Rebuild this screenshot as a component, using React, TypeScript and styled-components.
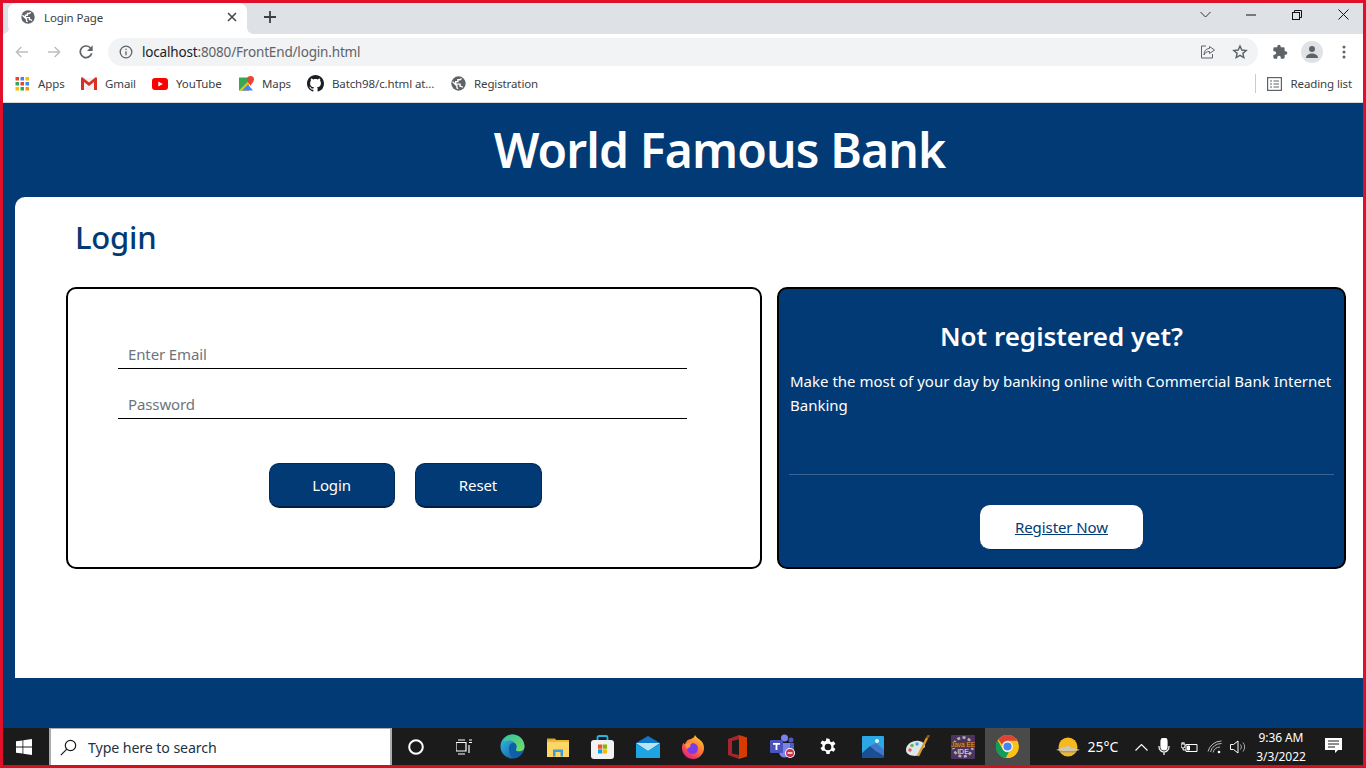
import React from "react";
import styled, { createGlobalStyle } from "styled-components";

const Global = createGlobalStyle`
  html, body { margin: 0; padding: 0; height: 100%; overflow: hidden; background: #fff; }
  * { box-sizing: border-box; }
  body { font-family: "Noto Sans", "Open Sans", "Liberation Sans", sans-serif; }
`;

const Frame = styled.div`
  width: 1366px; height: 768px; border: 3px solid #e0102a; border-bottom-color: #d0121f;
  display: flex; flex-direction: column; overflow: hidden;
`;
const TabStrip = styled.div`
  height: 31px; background: #dee1e6; display: flex; align-items: flex-end; padding-left: 5px; flex: none;
`;
const Tab = styled.div`
  position: relative;
  width: 239px; height: 31px; background: #fff; border-radius: 8px 8px 0 0; display: flex; align-items: center;
  padding: 0 10px 3px 13px; font-size: 11.5px; color: #3c4043; gap: 9px; letter-spacing: -0.1px;
  &::before, &::after { content: ""; position: absolute; bottom: 0; width: 6px; height: 6px; }
  &::before { left: -5px; background: radial-gradient(circle at 0 0, #dee1e6 5.500px, #fff 6px); }
  &::after { right: -6px; background: radial-gradient(circle at 100% 0, #dee1e6 5.500px, #fff 6px); }
`;
const TabTitle = styled.span` flex: 1; `;
const NewTab = styled.div` margin: 0 0 3px 12px; width: 22px; height: 28px; display: flex; align-items: center; justify-content: center; `;
const WindowControls = styled.div`
  margin-left: auto; margin-right: -3px; height: 31px; display: flex; align-items: center; padding: 0 0 8px 0;
`;
const WinButton = styled.div<{ $w: number }>`
  width: ${p => p.$w}px; display: flex; justify-content: center; align-items: center;
`;
const Toolbar = styled.div`
  height: 35px; background: #fff; display: flex; align-items: center; flex: none; padding-left: 3px;
`;
const NavButton = styled.div`
  width: 32px; height: 28px; display: flex; align-items: center; justify-content: center;
`;
const Omnibox = styled.div`
  margin-left: 6px; width: 1150px; height: 28px; background: #f1f3f4; border-radius: 14px; display: flex; align-items: center;
  padding: 0 2px 0 11px; font-size: 13.5px; color: #5f6368; letter-spacing: -0.17px;
`;
const Host = styled.span` color: #202124; `;
const UrlText = styled.span` flex: 1; margin-left: 9px; `;
const OmniIcon = styled.span` width: 32px; display: flex; justify-content: center; `;
const ToolIcons = styled.div` display: flex; align-items: center; margin-left: 14px; `;
const Avatar = styled.div`
  width: 22px; height: 22px; border-radius: 50%; background: #e0e2e6; display: flex; align-items: center; justify-content: center;
  margin: 0 14px 0 13px;
`;
const Bookmarks = styled.div`
  height: 34px; background: #fff; border-bottom: 1px solid #d4d6d9; display: flex; align-items: center; flex: none;
  padding: 0 11px 4px 12px; font-size: 11.5px; color: #3c4043; letter-spacing: -0.12px;
`;
const Bookmark = styled.div<{ $w: number }>`
  width: ${p => p.$w}px; display: flex; align-items: center; gap: 8px; white-space: nowrap;
`;
const ReadingList = styled.div`
  margin-left: auto; border-left: 1px solid #c9cbce; padding-left: 11px; height: 19px; display: flex; align-items: center; gap: 9px;
`;
const Page = styled.div`
  flex: 1; background: #023a75; display: flex; flex-direction: column; min-height: 0;
`;
const Title = styled.h1`
  margin: 0; height: 94px; line-height: 93px; text-align: center; color: #fff; font-size: 48px; font-weight: 600; padding-left: 73px;
  letter-spacing: -0.86px;
`;
const Main = styled.main`
  margin-left: 12px; height: 481px; background: #fff; border-radius: 10px 0 0 0; padding: 18px 17px 0 51px;
`;
const Heading = styled.h2`
  margin: 0 0 28px 9px; height: 44px; line-height: 44px; color: #023a75; font-size: 31px; font-weight: 500; letter-spacing: -0.2px;
`;
const Cards = styled.div` display: grid; grid-template-columns: 696px 569px; gap: 15px; `;
const LoginCard = styled.form`
  height: 282px; border: 2px solid #000; border-radius: 10px; padding: 48px 0 0 50px; background: #fff;
`;
const Field = styled.div`
  width: 569px; height: 32px; margin-bottom: 18px; border-bottom: 1px solid #000; padding: 7px 0 0 10px;
  font-size: 15px; line-height: 20px; color: #6c757d; letter-spacing: -0.12px;
`;
const Buttons = styled.div` display: flex; justify-content: center; gap: 20px; margin: 44px 0 0 -22px; width: 618px; `;
const PrimaryButton = styled.button<{ $w: number }>`
  width: ${p => p.$w}px; height: 45px; background: #023a75; color: #fff; border: 1px solid #012a55; border-bottom: 2px solid #011f40; border-radius: 10px;
  font: inherit; font-size: 15px; letter-spacing: -0.12px; padding: 0 0 1px;
`;
const InfoCard = styled.section`
  height: 282px; border: 2px solid #000; border-radius: 10px; background: #023a75; color: #fff; padding: 29px 10px 0 10px;
  display: flex; flex-direction: column;
`;
const InfoTitle = styled.h3`
  margin: 0; height: 36px; line-height: 36px; text-align: center; font-size: 26px; font-weight: 600; letter-spacing: 0;
`;
const InfoText = styled.p`
  margin: 15px 0 0 1px; font-size: 15px; line-height: 24px; letter-spacing: 0; height: 48px;
`;
const Rule = styled.hr`
  margin: 57px 0 0; border: 0; height: 1px; background: #3a6493; flex: none;
`;
const RegisterRow = styled.div` display: flex; justify-content: center; margin-top: 30px; `;
const RegisterLink = styled.a`
  width: 163px; height: 45px; line-height: 44px; background: #fff; border-radius: 10px; text-align: center; color: #023a75;
  font-size: 15px; text-decoration: underline; letter-spacing: -0.08px; border-bottom: 1px solid #012a55; cursor: pointer;
`;
const Taskbar = styled.div`
  height: 37px; flex: none; background: #1b1b1b; display: flex; align-items: center; color: #fff;
`;
const Start = styled.div` width: 46px; height: 100%; display: flex; align-items: center; justify-content: center; padding-right: 4px; `;
const SearchBox = styled.div`
  width: 343px; height: 100%; background: #fff; border: 2px solid #a9adb0; border-width: 1px 2px 0 2px; display: flex; align-items: center; color: #1f3344;
  font-size: 14.2px; padding: 1px 0 0 9px; gap: 11px; letter-spacing: -0.1px;
`;
const TaskCell = styled.div<{ $w?: number; $active?: boolean }>`
  width: ${p => p.$w ?? 45}px; height: 100%; flex: none; display: flex; align-items: center; justify-content: center;
  background: ${p => (p.$active ? "#4a4a4a" : "transparent")};
`;
const Tray = styled.div` display: flex; align-items: center; height: 100%; font-size: 14px; padding-left: 26px; flex: 1; `;
const TrayCell = styled.div<{ $w: number }>`
  width: ${p => p.$w}px; display: flex; justify-content: center; align-items: center; flex: none;
`;
const Clock = styled.div`
  width: 64px; text-align: center; font-size: 12px; line-height: 19px; letter-spacing: -0.1px; white-space: nowrap;
`;

const Globe = ({ s = 14, c = "#5f6368" }: { s?: number; c?: string }) => (
  <svg width={s} height={s} viewBox="0 0 24 24">
    <circle cx="12" cy="12" r="11.500" fill={c} />
    <path fill="none" stroke="#fff" strokeWidth="2.200" d="M2.500 9l7 7v2.500c0 1 1 1.500 2 1.500M18.500 18.500c-.3-1-1.200-2-2.300-2H14.500V13H7.500V9H11V6h3c1.200 0 2.200-1 2.200-2.500"/>
  </svg>
);

const Back = ({ c }: { c: string }) => (
  <svg width="16" height="16" viewBox="0 0 24 24" fill="none" stroke={c} strokeWidth="2.200"><path d="M21 12H4M11 4.500 3.500 12l7.500 7.500"/></svg>
);
const Forward = ({ c }: { c: string }) => (
  <svg width="16" height="16" viewBox="0 0 24 24" fill="none" stroke={c} strokeWidth="2.200"><path d="M3 12h17M13 4.500l7.500 7.500-7.500 7.500"/></svg>
);

const MsLogo = () => (
  <svg width="16" height="16" viewBox="0 0 16 16"><path fill="#fff" d="M0 2.300 6.500 1.400v6.200H0zM7.300 1.300 16 0v7.600H7.300zM0 8.400h6.500v6.200L0 13.700zM7.300 8.400H16V16l-8.700-1.300z"/></svg>
);

const Edge = () => (
  <svg width="25" height="25" viewBox="0 0 25 25">
    <defs>
      <linearGradient id="edgeA" x1="0" y1="0" x2="1" y2="1"><stop offset="0" stopColor="#35c1f1"/><stop offset="1" stopColor="#114a8b"/></linearGradient>
      <linearGradient id="edgeB" x1="0" y1="0" x2="1" y2="1"><stop offset="0" stopColor="#2fc0a8"/><stop offset="1" stopColor="#7be05a"/></linearGradient>
    </defs>
    <circle cx="12.500" cy="12.500" r="12" fill="url(#edgeA)"/>
    <path fill="url(#edgeB)" d="M3 6C6 1 11 .500 12.500.500 19 .500 24.500 6 24.500 12.500c0 3-2.500 5-5.500 5-2 0-3.500-.7-3.500-1.500 1-1 1.500-2 1-4C15.500 8 12 6 8.500 6.500 6 7 4 8 3 6z"/>
    <path fill="#0f5ea8" d="M9 14c0-4 3-5.500 5-5 2.500.7 3 3 2 5-1 2 .5 3.500 3 3.500 1.500 0 3-.5 4-1.500-1.500 4.500-6 8-10 7.500-3-.5-4-6-4-9.500z"/>
  </svg>
);
const Explorer = () => (
  <svg width="22" height="22" viewBox="0 0 22 22">
    <path fill="#d9a520" d="M0 2.500h8l2 2.500H0z"/>
    <rect y="4" width="22" height="4" fill="#e8b93a"/>
    <rect y="6" width="22" height="15" fill="#fcd765"/>
    <path fill="#3e9ad8" d="M6 20.500V13.500h10v7h-2.500v-4.500h-5v4.500z"/>
  </svg>
);
const Store = () => (
  <svg width="23" height="24" viewBox="0 0 23 24">
    <path fill="none" stroke="#22b5ea" strokeWidth="1.800" d="M6.500 7V2.500a1.500 1.500 0 0 1 1.500-1.500h7a1.500 1.500 0 0 1 1.500 1.500V7"/>
    <rect y="5" width="23" height="19" rx="3" fill="#f2f2f2"/>
    <rect x="7" y="9.500" width="4.200" height="4.200" fill="#f25022"/>
    <rect x="11.800" y="9.500" width="4.200" height="4.200" fill="#7fba00"/>
    <rect x="7" y="14.300" width="4.200" height="4.200" fill="#00a4ef"/>
    <rect x="11.800" y="14.300" width="4.200" height="4.200" fill="#ffb900"/>
  </svg>
);
const Mail = () => (
  <svg width="24" height="22" viewBox="0 0 24 22">
    <path fill="#0f78c9" d="M12 0 24 7v15H0V7z"/>
    <path fill="#b8e6f7" d="M0 7h24L12 15z"/>
    <path fill="#1ea4e3" d="M0 8l12 7 12-7v14H0z"/>
  </svg>
);
const Firefox = () => (
  <svg width="24" height="24" viewBox="0 0 24 24">
    <defs><linearGradient id="ff" x1="0.800" y1="0" x2="0.200" y2="1"><stop offset="0" stopColor="#ffd02b"/><stop offset="0.500" stopColor="#ff7139"/><stop offset="1" stopColor="#e31587"/></linearGradient></defs>
    <path fill="url(#ff)" d="M14 0c1 2 2.500 3 4.500 4.500C22 7 23 10 23 13a11 11 0 0 1-22 0c0-2.500.7-4 1.500-5.500.3 1 .7 1.500 1.500 2 .4-2 1.500-3.500 3-4.500C10 4 13.500 3 14 0z"/>
    <circle cx="11.500" cy="13.500" r="5.500" fill="#7c3aed"/>
    <path fill="#ff9640" d="M4 10c2-2.500 5.500-3 7.500-2 -2 .8-2.500 2-2 3.500L6 14z"/>
  </svg>
);
const Office = () => (
  <svg width="19" height="24" viewBox="0 0 19 24">
    <path fill="#d83b01" d="M11 0l8 2.500v19L11 24z"/>
    <path fill="#a4262c" d="M11 0 0 4v16l11 4V20l-7-1.500V6l7-1.500z"/>
  </svg>
);
const Teams = () => (
  <svg width="26" height="25" viewBox="0 0 26 25">
    <circle cx="14.500" cy="4" r="3.500" fill="#7b83eb"/>
    <circle cx="21" cy="6" r="2.500" fill="#5059c9"/>
    <path fill="#5059c9" d="M16 9h8v7a4 4 0 0 1-8 0z"/>
    <path fill="#7b83eb" d="M9 9h11v9a5.500 5.500 0 0 1-11 0z"/>
    <rect y="6" width="13" height="13" rx="1" fill="#4b53bc"/>
    <path fill="#fff" d="M3 9h7v1.800H7.400V16H5.600v-5.200H3z"/>
    <circle cx="20" cy="19" r="5" fill="#fff"/>
    <circle cx="20" cy="19" r="4" fill="#c4314b"/>
    <rect x="17.500" y="18.300" width="5" height="1.400" fill="#fff"/>
  </svg>
);
const Gear = () => (
  <svg width="20" height="20" viewBox="0 0 24 24"><path fill="#fff" d="M13.900 1l.5 3c.6.2 1.200.4 1.700.8l2.800-1.200 2 3.300-2.400 1.900c.1.700.1 1.300 0 2l.1.200 2.300 1.800-2 3.300-2.800-1.200c-.5.400-1.100.7-1.700.9l-.5 3h-3.800l-.5-3c-.6-.2-1.200-.5-1.700-.9L5 15.100l-2-3.300 2.400-1.900c-.1-.7-.1-1.300 0-2L3 6l2-3.300 2.800 1.200c.5-.4 1.100-.7 1.700-.9l.5-3zM12 6.500a4 4 0 1 0 0 8 4 4 0 0 0 0-8z" transform="translate(0 1.500)"/></svg>
);
const Photos = () => (
  <svg width="22" height="22" viewBox="0 0 22 22">
    <rect width="22" height="22" rx="1" fill="#2aa7e4"/>
    <circle cx="15" cy="5" r="2" fill="#eaf6fd"/>
    <path fill="#1b4f93" d="M0 17l8-7 6 5 8 3v4H0z"/>
    <path fill="#4276c9" d="M8 10l6-3 8 7v6l-8-5z"/>
  </svg>
);
const Palette = () => (
  <svg width="26" height="24" viewBox="0 0 26 24">
    <path fill="#dfe6ea" d="M1 15C1 9 8 5 14 6c4 .6 6 3 6 5 0 3-4 2-5 4-.6 2 1 3-1 5-3 2-13 1-13-5z"/>
    <circle cx="5" cy="15" r="1.700" fill="#e0555c"/><circle cx="7" cy="10.500" r="1.700" fill="#5cb85c"/><circle cx="12" cy="9" r="1.700" fill="#3ea6e0"/>
    <path stroke="#d99a2b" strokeWidth="2.400" d="M13 21 22 3"/>
    <path stroke="#8b5a2b" strokeWidth="2.400" d="M22 3 24 0"/>
  </svg>
);
const JavaEE = () => (
  <svg width="24" height="24" viewBox="0 0 24 24">
    <rect width="24" height="24" rx="1" fill="#4b3560"/>
    <circle cx="12" cy="12" r="9.500" fill="none" stroke="#b9b4b4" strokeWidth="2.500" strokeDasharray="3 2.500"/>
    <rect x="0" y="7" width="24" height="6" fill="#5a3a2a"/>
    <text x="12" y="12" textAnchor="middle" fontSize="6.500" fontFamily="Liberation Sans, sans-serif" fill="#e59a3a">Java EE</text>
    <text x="12" y="19" textAnchor="middle" fontSize="7" fontFamily="Liberation Sans, sans-serif" fill="#f1f1f1">IDE</text>
  </svg>
);
const Chrome = () => (
  <svg width="23" height="23" viewBox="0 0 24 24">
    <circle cx="12" cy="12" r="12" fill="#fbc116"/>
    <path fill="#db4437" d="M12 0a12 12 0 0 1 10.400 6H12a6 6 0 0 0-5.700 4L2.300 4.500A12 12 0 0 1 12 0z"/>
    <path fill="#0f9d58" d="M1.700 5.500 7 15a6 6 0 0 0 6.500 2.800L10 24A12 12 0 0 1 1.700 5.500z"/>
    <circle cx="12" cy="12" r="5.500" fill="#fff"/><circle cx="12" cy="12" r="4.300" fill="#4285f4"/>
  </svg>
);
const Weather = () => (
  <svg width="24" height="20" viewBox="0 0 24 20">
    <circle cx="12" cy="10" r="9.500" fill="#f6b71f"/>
    <path fill="#cfc6b4" d="M0 13c3-.8 5-3.500 9-3 2-1.500 5-1.500 6.500 1 3 0 6 1 8.500 2-6 1.500-17 1.500-24 0z"/>
    <path fill="#a89a80" d="M4 14h16v1.500H4z"/>
  </svg>
);

export default function App() {
  return (
    <>
      <Global />
      <Frame>
        <TabStrip>
          <Tab>
            <Globe />
            <TabTitle>Login Page</TabTitle>
            <svg width="10" height="10" viewBox="0 0 10 10" stroke="#45494d" strokeWidth="1.600"><path d="M1 1l8 8M9 1 1 9"/></svg>
          </Tab>
          <NewTab>
            <svg width="12" height="12" viewBox="0 0 12 12" stroke="#3c4043" strokeWidth="1.800"><path d="M6 0v12M0 6h12"/></svg>
          </NewTab>
          <WindowControls>
            <WinButton $w={46}>
              <svg width="11" height="7" viewBox="0 0 11 7" fill="none" stroke="#333" strokeWidth="1"><path d="M.5 1 5.500 6 10.500 1"/></svg>
            </WinButton>
            <WinButton $w={46}>
              <svg width="10" height="2" viewBox="0 0 10 2" stroke="#111" strokeWidth="1"><path d="M0 1h10"/></svg>
            </WinButton>
            <WinButton $w={46}>
              <svg width="10" height="10" viewBox="0 0 10 10" fill="none" stroke="#111" strokeWidth="1"><rect x=".5" y="2.500" width="7" height="7"/><path d="M2.500 2.500V.5h7v7h-2"/></svg>
            </WinButton>
            <WinButton $w={46}>
              <svg width="11" height="11" viewBox="0 0 11 11" stroke="#111" strokeWidth="1"><path d="M.5.500l10 10M10.500.500l-10 10"/></svg>
            </WinButton>
          </WindowControls>
        </TabStrip>
        <Toolbar>
          <NavButton><Back c="#bcbfc3" /></NavButton>
          <NavButton><Forward c="#bcbfc3" /></NavButton>
          <NavButton>
            <svg width="16" height="16" viewBox="0 0 24 24"><path fill="#5f6368" d="M19.300 4.700A10 10 0 1 0 21.900 14h-2.600a7.500 7.500 0 1 1-1.800-7.700L13.500 10.500H22V2z"/></svg>
          </NavButton>
          <Omnibox>
            <svg width="14" height="14" viewBox="0 0 14 14" fill="none" stroke="#5f6368" strokeWidth="1.300"><circle cx="7" cy="7" r="5.800"/><path d="M7 6.200v4M7 3.800v1.300"/></svg>
            <UrlText><Host>localhost</Host>:8080/FrontEnd/login.html</UrlText>
            <OmniIcon>
              <svg width="16" height="16" viewBox="0 0 16 16" fill="none" stroke="#5f6368" strokeWidth="1"><path d="M6 2H1.500v12h11V10M9.500 2.500 14.500 6 9.500 9.500V7.500C7 7.500 5 8.500 4 11c0-4 2-6.300 5.500-6.700z"/></svg>
            </OmniIcon>
            <OmniIcon>
              <svg width="16" height="16" viewBox="0 0 24 24" fill="none" stroke="#5f6368" strokeWidth="2.200"><path d="M12 3l2.700 6 6.500.7-4.900 4.300 1.400 6.400L12 17l-5.700 3.400 1.400-6.400-4.900-4.300L9.300 9z"/></svg>
            </OmniIcon>
          </Omnibox>
          <ToolIcons>
            <svg width="16" height="16" viewBox="0 0 24 24"><path fill="#5f6368" d="M20.500 11H19V7a2 2 0 0 0-2-2h-4V3.500a2.500 2.500 0 0 0-5 0V5H4a2 2 0 0 0-2 2v3.800h1.500a2.700 2.700 0 0 1 0 5.400H2V20a2 2 0 0 0 2 2h3.800v-1.500a2.700 2.700 0 0 1 5.400 0V22H17a2 2 0 0 0 2-2v-4h1.500a2.500 2.500 0 0 0 0-5z"/></svg>
            <Avatar>
              <svg width="14" height="14" viewBox="0 0 14 14"><circle cx="7" cy="4" r="3" fill="#5f6368"/><path fill="#5f6368" d="M1 13c0-3 3-4.500 6-4.500s6 1.500 6 4.500z"/></svg>
            </Avatar>
            <svg width="14" height="14" viewBox="0 0 14 14" fill="#5f6368"><circle cx="7" cy="2" r="1.500"/><circle cx="7" cy="7" r="1.500"/><circle cx="7" cy="12" r="1.500"/></svg>
          </ToolIcons>
        </Toolbar>
        <Bookmarks>
          <Bookmark $w={66}>
            <svg width="15" height="14" viewBox="0 0 15 14">
              {[0, 5, 10].flatMap(y => [0, 5, 10].map(x => (
                <rect key={`${x}-${y}`} x={x + 0.5} y={y} width="3.500" height="3.500" fill={y === 0 ? (x === 10 ? "#fbbc05" : x === 5 ? "#4285f4" : "#ea4335") : y === 5 ? (x === 0 ? "#34a853" : x === 5 ? "#ea4335" : "#4285f4") : (x === 0 ? "#fbbc05" : x === 5 ? "#34a853" : "#f29900")} />
              )))}
            </svg>
            Apps
          </Bookmark>
          <Bookmark $w={71}>
            <svg width="16" height="13" viewBox="0 0 16 13"><path fill="#f1f1f1" d="M1 1h14v12H1z"/><path fill="#d93025" d="M0 1.500C0 .5 1 0 2 .7L8 5.500 14 .7c1-.7 2-.2 2 .8V13h-3V5L8 9 3 5v8H0z"/></svg>
            Gmail
          </Bookmark>
          <Bookmark $w={87}>
            <svg width="16" height="12" viewBox="0 0 16 12"><rect width="16" height="12" rx="3" fill="#f00"/><path fill="#fff" d="M6.300 3.400v5.200L10.800 6z"/></svg>
            YouTube
          </Bookmark>
          <Bookmark $w={68}>
            <svg width="15" height="15" viewBox="0 0 15 15"><path fill="#34a853" d="M0 1.500h10v13H0z"/><path fill="#fbbc05" d="M0 14.500 10 4.500v10H10z"/><path fill="#4285f4" d="M3 14.500 9 8.500l5 6z"/><path fill="#ea4335" d="M11.500 0A3.500 3.500 0 0 1 15 3.500C15 6 12 8 11.500 10 11 8 8 6 8 3.500A3.500 3.500 0 0 1 11.500 0z"/></svg>
            Maps
          </Bookmark>
          <Bookmark $w={144}>
            <svg width="17" height="17" viewBox="0 0 16 16"><path fill="#1b1f23" d="M8 0C3.580 0 0 3.580 0 8c0 3.540 2.290 6.530 5.470 7.590.4.070.55-.17.55-.38 0-.19-.01-.82-.01-1.490-2.010.37-2.530-.49-2.690-.94-.09-.23-.48-.94-.82-1.130-.28-.15-.68-.52-.01-.53.63-.01 1.080.58 1.230.82.720 1.210 1.870.87 2.330.66.070-.52.280-.87.510-1.070-1.780-.2-3.640-.89-3.640-3.950 0-.87.310-1.590.820-2.150-.08-.2-.36-1.020.08-2.120 0 0 .67-.21 2.200.82.640-.18 1.320-.27 2-.27s1.360.09 2 .27c1.530-1.040 2.200-.82 2.200-.82.440 1.100.16 1.920.08 2.120.51.560.82 1.270.82 2.150 0 3.070-1.870 3.750-3.650 3.950.29.250.54.730.54 1.480 0 1.070-.01 1.930-.01 2.200 0 .21.150.46.550.38A8.010 8.010 0 0 0 16 8c0-4.420-3.580-8-8-8z"/></svg>
            Batch98/c.html at...
          </Bookmark>
          <Bookmark $w={100}>
            <Globe s={15} />
            Registration
          </Bookmark>
          <ReadingList>
            <svg width="15" height="14" viewBox="0 0 15 14" fill="none" stroke="#5f6368" strokeWidth="1.200"><rect x=".6" y=".6" width="13.800" height="12.800"/><path d="M3 4h2M3 7h2M3 10h2M6.500 4H12M6.500 7H12M6.500 10H12"/></svg>
            Reading list
          </ReadingList>
        </Bookmarks>
        <Page>
          <Title>World Famous Bank</Title>
          <Main>
            <Heading>Login</Heading>
            <Cards>
              <LoginCard>
                <Field>Enter Email</Field>
                <Field>Password</Field>
                <Buttons>
                  <PrimaryButton type="button" $w={126}>Login</PrimaryButton>
                  <PrimaryButton type="button" $w={127}>Reset</PrimaryButton>
                </Buttons>
              </LoginCard>
              <InfoCard>
                <InfoTitle>Not registered yet?</InfoTitle>
                <InfoText>Make the most of your day by banking online with Commercial Bank Internet Banking</InfoText>
                <Rule />
                <RegisterRow><RegisterLink>Register Now</RegisterLink></RegisterRow>
              </InfoCard>
            </Cards>
          </Main>
        </Page>
        <Taskbar>
          <Start><MsLogo /></Start>
          <SearchBox>
            <svg width="17" height="17" viewBox="0 0 17 17" fill="none" stroke="#1a1a1a" strokeWidth="1.200"><circle cx="10.500" cy="6.500" r="5.200"/><path d="M6.800 10.200.8 16.200"/></svg>
            Type here to search
          </SearchBox>
          <TaskCell $w={48}>
            <svg width="16" height="16" viewBox="0 0 16 16" fill="none" stroke="#fff" strokeWidth="2"><circle cx="8" cy="8" r="6.800"/></svg>
          </TaskCell>
          <TaskCell $w={47}>
            <svg width="16" height="16" viewBox="0 0 16 16" fill="none" stroke="#fff" strokeWidth="1.200"><path d="M0 3.500h10v8.500H0zM2 1h7M2 15h7M13 1h3M13 3.500h3M13 6v8"/></svg>
          </TaskCell>
          <TaskCell $w={3} />
          <TaskCell><Edge /></TaskCell>
          <TaskCell><Explorer /></TaskCell>
          <TaskCell><Store /></TaskCell>
          <TaskCell><Mail /></TaskCell>
          <TaskCell><Firefox /></TaskCell>
          <TaskCell><Office /></TaskCell>
          <TaskCell><Teams /></TaskCell>
          <TaskCell><Gear /></TaskCell>
          <TaskCell><Photos /></TaskCell>
          <TaskCell><Palette /></TaskCell>
          <TaskCell><JavaEE /></TaskCell>
          <TaskCell $active><Chrome /></TaskCell>
          <Tray>
            <TrayCell $w={24}><Weather /></TrayCell>
            <TrayCell $w={46}>25°C</TrayCell>
            <TrayCell $w={4} />
            <TrayCell $w={22}>
              <svg width="13" height="8" viewBox="0 0 13 8" fill="none" stroke="#fff" strokeWidth="1.200"><path d="M.5 7.500 6.500 1.500l6 6"/></svg>
            </TrayCell>
            <TrayCell $w={24}>
              <svg width="12" height="18" viewBox="0 0 12 18" fill="none" stroke="#fff" strokeWidth="1.200"><rect x="3" y="0" width="6" height="12" rx="3" fill="#fff"/><path d="M1 8v1a5 5 0 0 0 10 0V8M6 14v3"/></svg>
            </TrayCell>
            <TrayCell $w={26}>
              <svg width="17" height="12" viewBox="0 0 17 12" fill="none" stroke="#fff" strokeWidth="1"><path d="M5 3.500h11v7H5z"/><path d="M0 3h4v2a2 2 0 0 1-4 0zM1.200 1v2M2.900 1v2M2 7v2H5"/><path d="M6.500 5h2v4h-2z" fill="#fff"/></svg>
            </TrayCell>
            <TrayCell $w={25}>
              <svg width="16" height="14" viewBox="0 0 16 14" fill="none" stroke="#bbb" strokeWidth="1"><path d="M1 11.500A14 14 0 0 1 14.500 1M3.500 12A11 11 0 0 1 14.500 3.500M6 12.500A7.500 7.500 0 0 1 13 7"/><circle cx="12" cy="12" r="1.300" fill="#fff" stroke="none"/></svg>
            </TrayCell>
            <TrayCell $w={22}>
              <svg width="17" height="14" viewBox="0 0 17 14" fill="none" stroke="#fff" strokeWidth="1"><path d="M.5 4.500h3L8 1v12L3.500 9.500h-3z"/><path stroke="#aaa" d="M10.500 4.500a4 4 0 0 1 0 5M13 2.500a7.500 7.500 0 0 1 0 9"/></svg>
            </TrayCell>
            <Clock>9:36 AM<br />3/3/2022</Clock>
            <TrayCell $w={40}>
              <svg width="17" height="17" viewBox="0 0 17 17"><path fill="#fff" d="M0 0h17v12h-4l-3 3v-3H0z"/><path stroke="#1b1b1b" d="M3 3h11M3 6h11M3 9h7"/></svg>
            </TrayCell>
          </Tray>
        </Taskbar>
      </Frame>
    </>
  );
}
